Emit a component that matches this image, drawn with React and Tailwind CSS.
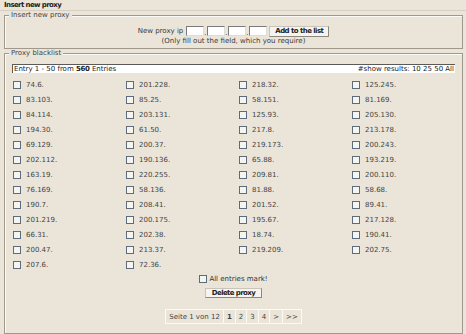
import React from "react";

const c1 = ["74.6.", "83.103.", "84.114.", "194.30.", "69.129.", "202.112.", "163.19.", "76.169.", "190.7.", "201.219.", "66.31.", "200.47.", "207.6."];
const c2 = ["201.228.", "85.25.", "203.131.", "61.50.", "200.37.", "190.136.", "220.255.", "58.136.", "208.41.", "200.175.", "202.38.", "213.37.", "72.36."];
const c3 = ["218.32.", "58.151.", "125.93.", "217.8.", "219.173.", "65.88.", "209.81.", "81.88.", "201.52.", "195.67.", "18.74.", "219.209."];
const c4 = ["125.245.", "81.169.", "205.130.", "213.178.", "200.243.", "193.219.", "200.110.", "58.68.", "89.41.", "217.128.", "190.41.", "202.75."];

const items = [];
for (let i = 0; i < 13; i++) {
  [c1[i], c2[i], c3[i], c4[i]].forEach((v) => {
    if (v) items.push(v);
  });
}

function Box() {
  return <span className="block w-[8px] h-[8px] border border-[#5d6b7a] bg-[#f4f4f1] shrink-0" />;
}

function IpInput() {
  return (
    <span className="block w-[18px] h-[10px] bg-white border border-t-[#7b7b7b] border-l-[#7b7b7b] border-b-[#dcdcdc] border-r-[#dcdcdc]" />
  );
}

export default function App() {
  return (
    <div className="w-[466px] h-[334px] overflow-hidden bg-[#eae4d9] text-[#3a3a3a] text-[7px] leading-[8px] font-['DejaVu_Sans',sans-serif]">
      <div className="h-[11px] px-[4px] pt-[1px] border-b border-[#d6cec0] font-bold tracking-[-0.6px] text-[#222] leading-[8px]">
        Insert new proxy
      </div>

      <fieldset className="ml-[4px] mr-[3px] px-[7px] pb-[3px] border border-[#9f988b] shadow-[inset_1px_1px_0_#fbfaf7]">
        <legend className="-ml-[3px] px-[2px] pt-[1px] leading-[7px] bg-[#eae4d9] text-[#444]">Insert new proxy</legend>
        <div className="flex flex-col items-center">
          <div className="mt-[7px] flex items-center h-[10px]">
            <span className="mr-[3px]">New proxy ip</span>
            <IpInput />
            <span className="w-[3px] self-end leading-[6px]">.</span>
            <IpInput />
            <span className="w-[3px] self-end leading-[6px]">.</span>
            <IpInput />
            <span className="w-[3px] self-end leading-[6px]">.</span>
            <IpInput />
            <button className="ml-[2px] w-[60px] h-[11px] flex items-center justify-center bg-[#f5f4f0] border border-[#c9c3b8] border-r-[#8e877b] border-b-[#8e877b] font-bold tracking-[-0.55px] text-[#222] leading-[8px]">
              Add to the list
            </button>
          </div>
          <div className="mt-[1px] h-[8px]">(Only fill out the field, which you require)</div>
        </div>
      </fieldset>

      <fieldset className="ml-[4px] mr-[3px] px-[7px] pb-[9px] border border-[#9f988b] shadow-[inset_1px_1px_0_#fbfaf7]">
        <legend className="-ml-[3px] px-[2px] pt-[1px] leading-[7px] bg-[#eae4d9] text-[#444]">Proxy blacklist</legend>
        <div className="mt-[7px] h-[9px] flex justify-between items-center pl-[1px] pr-[1px] bg-white border-t border-l border-[#5a5a5a] text-[#222]">
          <span>
            Entry 1 - 50 from <b className="tracking-[-0.3px]">560</b> Entries
          </span>
          <span>#show results: 10 25 50 All</span>
        </div>
        <div className="mt-[4px] pl-[1px] grid grid-cols-[113px_113px_113px_1fr]">
          {items.map((v, i) => (
            <div key={i} className="h-[15px] flex items-center">
              <Box />
              <span className="ml-[5px] text-[#444]">{v}</span>
            </div>
          ))}
        </div>
        <div className="flex flex-col items-center">
          <div className="mt-[3px] h-[8px] flex items-center">
            <Box />
            <span className="ml-[2px] text-[#333]">All entries mark!</span>
          </div>
          <button className="mt-[5px] w-[57px] h-[10px] flex items-center justify-center bg-[#f5f4f0] border border-[#c9c3b8] border-r-[#8e877b] border-b-[#8e877b] font-bold tracking-[-0.6px] text-[#222] leading-[8px]">
            Delete proxy
          </button>
          <div className="mt-[11px] h-[15px] flex items-stretch border border-[#fbfaf6] text-[#444]">
            <span className="flex items-center px-[3px] border-r border-[#fbfaf6]">Seite 1 von 12</span>
            <span className="flex items-center px-[3px] border-r border-[#fbfaf6] font-bold">1</span>
            <span className="flex items-center px-[3px] border-r border-[#fbfaf6]">2</span>
            <span className="flex items-center px-[3px] border-r border-[#fbfaf6]">3</span>
            <span className="flex items-center px-[3px] border-r border-[#fbfaf6]">4</span>
            <span className="flex items-center px-[3px] border-r border-[#fbfaf6]">&gt;</span>
            <span className="flex items-center px-[3px]">&gt;&gt;</span>
          </div>
        </div>
      </fieldset>
    </div>
  );
}
